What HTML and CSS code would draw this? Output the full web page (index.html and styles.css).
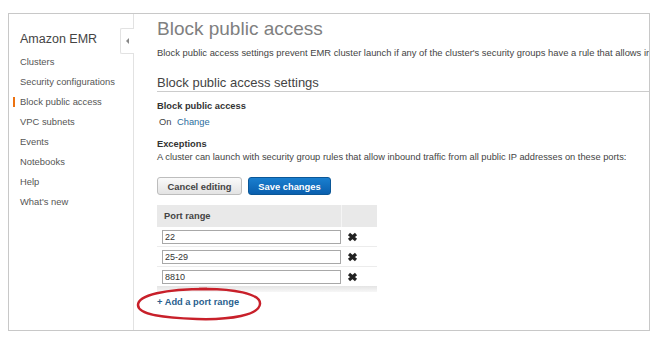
FILE: index.html
```html
<!DOCTYPE html>
<html lang="en">
<head>
  <meta charset="UTF-8">
  <title>Block public access - Amazon EMR</title>
  <link rel="stylesheet" href="styles.css">
</head>
<body>
  <div class="consola">
    <nav class="menu">
      <h2 class="menu-titulo">Amazon EMR</h2>
      <a class="menu-item">Clusters</a>
      <a class="menu-item">Security configurations</a>
      <a class="menu-item activo">Block public access</a>
      <a class="menu-item">VPC subnets</a>
      <a class="menu-item">Events</a>
      <a class="menu-item">Notebooks</a>
      <a class="menu-item">Help</a>
      <a class="menu-item">What's new</a>
      <div class="pestana"><span class="flecha"></span></div>
    </nav>

    <main class="contenido">
      <h1>Block public access</h1>
      <p class="descripcion">Block public access settings prevent EMR cluster launch if any of the cluster's security groups have a rule that allows inbound traffic from all public IP addresses.</p>

      <h3 class="seccion">Block public access settings</h3>

      <div class="etiqueta">Block public access</div>
      <div class="estado">On <a class="enlace">Change</a></div>

      <div class="etiqueta excepciones">Exceptions</div>
      <p class="texto">A cluster can launch with security group rules that allow inbound traffic from all public IP addresses on these ports:</p>

      <div class="botones">
        <button class="btn">Cancel editing</button>
        <button class="btn primario">Save changes</button>
      </div>

      <table class="puertos">
        <thead>
          <tr><th>Port range</th><th class="col-x"></th></tr>
        </thead>
        <tbody>
          <tr>
            <td><input type="text" value="22"></td>
            <td class="col-x"><svg class="quitar" viewBox="0 0 11 10"><path d="M2 2 L9 8 M9 2 L2 8"/></svg></td>
          </tr>
          <tr>
            <td><input type="text" value="25-29"></td>
            <td class="col-x"><svg class="quitar" viewBox="0 0 11 10"><path d="M2 2 L9 8 M9 2 L2 8"/></svg></td>
          </tr>
          <tr>
            <td><input type="text" value="8810"></td>
            <td class="col-x"><svg class="quitar" viewBox="0 0 11 10"><path d="M2 2 L9 8 M9 2 L2 8"/></svg></td>
          </tr>
        </tbody>
      </table>
      <div class="pie-tabla"></div>

      <div class="agregar">
        <a class="enlace fuerte">+ Add a port range</a>
        <!-- marca roja a mano alrededor del enlace -->
        <svg class="circulo" viewBox="0 0 128 36">
          <path d="M64 3 C98 2 126 8 125 18 C124 29 96 34 62 33 C30 32 3 29 3 19 C3 9 30 3 72 3"/>
        </svg>
      </div>
    </main>
  </div>
</body>
</html>
```

FILE: styles.css
```css
body {
  margin: 0;
  background: #fff;
  font-family: 'Liberation Sans', Arial, sans-serif;
  color: #444;
}
.consola {
  margin: 13px 0 0 8px;
  width: 640px;
  height: 316px;
  border: 1px solid #c8c8c8;
  display: flex;
}
.menu {
  position: relative;
  width: 125px;
  flex-shrink: 0;
  border-right: 1px solid #e2e2e2;
  padding: 17px 0 0 11px;
  box-sizing: border-box;
  display: flex;
  flex-direction: column;
}
.menu-titulo {
  margin: 0 0 5px;
  font-size: 12.5px;
  font-weight: normal;
  line-height: 16px;
  color: #444;
}
.menu-item {
  font-size: 9.4px;
  line-height: 20px;
  color: #555;
  position: relative;
}
.menu-item.activo::before {
  content: "";
  position: absolute;
  left: -7px;
  top: 5px;
  width: 2px;
  height: 10px;
  background: #ec7211;
}
.pestana {
  position: absolute;
  right: -1px;
  top: 14px;
  width: 13px;
  height: 24px;
  background: #fff;
  border: 1px solid #e2e2e2;
  border-right: none;
  border-radius: 2px 0 0 2px;
}
.flecha {
  position: absolute;
  left: 5px;
  top: 9px;
  border-top: 3px solid transparent;
  border-bottom: 3px solid transparent;
  border-right: 3px solid #888;
}
.contenido {
  flex: 1;
  min-width: 0;
  overflow: hidden;
  padding: 4px 0 0 23px;
}
h1 {
  margin: 0;
  font-size: 19px;
  font-weight: normal;
  line-height: 22px;
  color: #808080;
}
.descripcion {
  margin: 7px 0 0;
  font-size: 9.4px;
  line-height: 12px;
  white-space: nowrap;
  color: #444;
}
.seccion {
  margin: 16px 0 0;
  font-size: 13px;
  font-weight: normal;
  line-height: 16px;
  color: #444;
  border-bottom: 1px solid #ccc;
}
.etiqueta {
  margin-top: 8px;
  font-size: 9.3px;
  font-weight: bold;
  line-height: 12px;
  color: #333;
}
.excepciones {
  margin-top: 10px;
}
.estado {
  margin-top: 4px;
  padding-left: 2px;
  font-size: 9.3px;
  line-height: 12px;
}
.enlace {
  color: #2a6d9e;
  margin-left: 3px;
}
.texto {
  margin: 1px 0 0;
  font-size: 9.3px;
  line-height: 12px;
  white-space: nowrap;
}
.botones {
  margin-top: 14px;
  display: flex;
  gap: 6px;
}
.btn {
  height: 18px;
  width: 85px;
  padding: 0;
  font-family: inherit;
  font-size: 9.4px;
  font-weight: bold;
  color: #444;
  background: linear-gradient(#fafafa, #e3e3e3);
  border: 1px solid #bdbdbd;
  border-radius: 3px;
}
.btn.primario {
  width: 83px;
  color: #fff;
  background: linear-gradient(#1a7fcf, #0a5fae);
  border-color: #0b5797;
}
.puertos {
  margin-top: 10px;
  width: 220px;
  border-collapse: collapse;
  font-size: 9.3px;
}
.puertos th {
  height: 22px;
  padding: 0 0 0 7px;
  text-align: left;
  background: #e9e9e9;
  color: #444;
  font-weight: bold;
}
.puertos th.col-x {
  border-left: 1px solid #f5f5f5;
  padding: 0;
}
.puertos td {
  height: 19px;
  padding: 0 0 0 5px;
  border-bottom: 1px solid #ececec;
}
.puertos tbody tr:last-child td {
  border-bottom: none;
}
.col-x {
  width: 33px;
}
.puertos td.col-x {
  padding: 0 0 0 6px;
}
.puertos input {
  display: block;
  width: 179px;
  height: 14px;
  box-sizing: border-box;
  padding: 0 2px;
  border: 1px solid #a8a8a8;
  font-family: inherit;
  font-size: 9px;
  color: #333;
}
.quitar {
  display: block;
  width: 11px;
  height: 10px;
  fill: none;
  stroke: #222;
  stroke-width: 3.2;
}
.pie-tabla {
  width: 220px;
  height: 6px;
  background: linear-gradient(#e4e4e4, #f7f7f7);
}
.agregar {
  position: relative;
  margin-top: 4px;
  font-size: 9.3px;
  line-height: 12px;
}
.enlace.fuerte {
  margin-left: 0;
  font-weight: bold;
  color: #2a5f8e;
}
.circulo {
  position: absolute;
  left: -22px;
  top: -10px;
  width: 128px;
  height: 36px;
  fill: none;
  stroke: #c8202a;
  stroke-width: 2.5;
}
```
